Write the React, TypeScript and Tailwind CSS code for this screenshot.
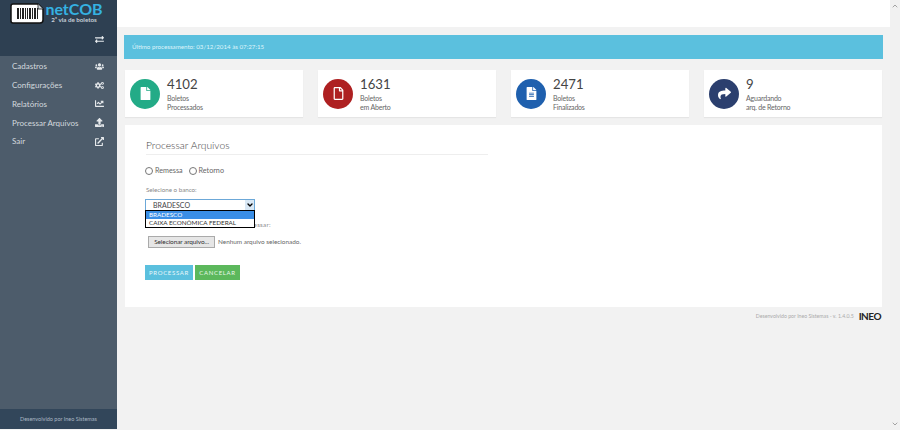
import React from "react";
import { ChevronDown, ChevronUp } from "lucide-react";
import {
  FaUsers,
  FaCogs,
  FaChartLine,
  FaUpload,
  FaExternalLinkAlt,
  FaFile,
  FaRegFile,
  FaFileAlt,
  FaShare,
  FaExchangeAlt,
} from "react-icons/fa";

const menu = [
  { label: "Cadastros", icon: FaUsers },
  { label: "Configurações", icon: FaCogs },
  { label: "Relatórios", icon: FaChartLine },
  { label: "Processar Arquivos", icon: FaUpload },
  { label: "Sair", icon: FaExternalLinkAlt },
];

const stats = [
  { value: "4102", l1: "Boletos", l2: "Processados", icon: FaFile, bg: "bg-[#23ab87]" },
  { value: "1631", l1: "Boletos", l2: "em Aberto", icon: FaRegFile, bg: "bg-[#ae2021]" },
  { value: "2471", l1: "Boletos", l2: "Finalizados", icon: FaFileAlt, bg: "bg-[#1f60ae]" },
  { value: "9", l1: "Aguardando", l2: "arq. de Retorno", icon: FaShare, bg: "bg-[#2b3f6e]" },
];

function BarcodeIcon() {
  const bars = [
    [7, 2], [10, 1], [12, 2], [15, 1], [17, 1], [19, 2], [22, 1], [24, 2], [27, 1],
  ];
  return (
    <svg width="34" height="21" viewBox="0 0 34 21" className="shrink-0">
      <path d="M3 1h25l5 5v11a3 3 0 0 1-3 3H3a2 2 0 0 1-2-2V3a2 2 0 0 1 2-2z" fill="#fff" stroke="#111" strokeWidth="1.5" />
      <path d="M28 1v5h5" fill="#cfd6dc" stroke="#111" strokeWidth="0.8" />
      {bars.map(([x, w]) => (
        <rect key={x} x={x} y="5" width={w} height="11" fill="#222" />
      ))}
    </svg>
  );
}

function Logo() {
  return (
    <div className="flex items-start pt-[3px] pl-[10px]">
      <BarcodeIcon />
      <div className="mt-[-2px] ml-[2px] flex w-[56px] flex-col items-center">
        <span className="text-[16px] leading-[16px] font-bold text-[#35b2e2]">netCOB</span>
        <span className="text-[6.2px] leading-[6px] font-bold text-[#c5ced6]">2ª via de boletos</span>
      </div>
    </div>
  );
}

function Sidebar() {
  return (
    <aside className="flex h-[429px] w-[117px] shrink-0 flex-col bg-[#4d5c6b]">
      <div className="h-[56px] bg-[#2e4052]">
        <Logo />
        <div className="mt-[11px] flex justify-end pr-[13px] text-[#e8ecef]">
          <FaExchangeAlt size={9} />
        </div>
      </div>
      <nav className="flex flex-1 flex-col pt-[1px]">
        {menu.map((m) => (
          <div key={m.label} className="flex h-[18.75px] items-center justify-between pr-[13px] pl-[12px] text-[8px] text-[#d3d9de]">
            <span>{m.label}</span>
            <m.icon size={9} className="text-[#e6e9ec]" />
          </div>
        ))}
      </nav>
      <div className="flex h-[20px] items-center justify-center bg-[#32465a] text-[5.5px] text-[#aab6c2]">
        Desenvolvido por Ineo Sistemas
      </div>
    </aside>
  );
}

function StatCard({ value, l1, l2, icon: Icon, bg }: (typeof stats)[number]) {
  return (
    <div className="flex h-[47px] w-[178px] items-center gap-[7px] bg-white pl-[5px] shadow-[0_1px_1px_rgba(0,0,0,0.05)]">
      <div className={`flex h-[30px] w-[30px] items-center justify-center rounded-full text-white ${bg}`}>
        <Icon size={13} />
      </div>
      <div className="mt-[2px] flex flex-col text-[#666]">
        <span className="mb-[2px] text-[13.2px] leading-[15px] text-[#444]">{value}</span>
        <span className="text-[7px] leading-[9.5px] tracking-[-0.2px]">{l1}</span>
        <span className="text-[7px] leading-[9.5px] tracking-[-0.2px]">{l2}</span>
      </div>
    </div>
  );
}

function Radio({ label }: { label: string }) {
  return (
    <label className="flex items-center gap-[2px] text-[7.2px] text-[#666]">
      <span className="h-[8px] w-[8px] rounded-full border border-[#777] bg-white" />
      {label}
    </label>
  );
}

function UploadForm() {
  return (
    <section className="h-[182px] w-[757px] bg-white pt-[14px] pl-[20px]">
      <h1 className="ml-[1px] w-[342px] border-b border-[#eee] pb-[2px] text-[10.3px] leading-[13px] font-light text-[#444]">
        Processar Arquivos
      </h1>
      <div className="mt-[11px] flex gap-[6px] leading-[10px]">
        <Radio label="Remessa" />
        <Radio label="Retorno" />
      </div>
      <div className="mt-[9px] ml-[1px] text-[6.2px] leading-[9px] text-[#888]">Selecione o banco:</div>
      <div className="relative mt-[5px] w-[110px]">
        <div className="flex h-[12px] items-center justify-between border border-[#6ca8d8] bg-white pl-[7px] text-[7px] text-[#444]">
          BRADESCO
          <span className="flex h-full w-[9px] items-center justify-center bg-[#d9e8f5] text-black">
            <ChevronDown size={8} strokeWidth={4} />
          </span>
        </div>
        <div className="absolute top-[11px] left-0 w-[110px] border border-black bg-white text-[6.3px] leading-[8px] text-[#333]">
          <div className="bg-[#3a8ee6] px-[3px] text-white">BRADESCO</div>
          <div className="px-[3px]">CAIXA ECONÔMICA FEDERAL</div>
        </div>
      </div>
      <div className="mt-[9px] ml-[1px] text-[6.2px] leading-[9px] tracking-[0.3px] text-[#888]">Selecione o arquivo que deseja processar:</div>
      <div className="mt-[7px] ml-[3px] flex items-center gap-[3px] text-[6.4px] text-[#666]">
        <button className="h-[12px] w-[67px] border border-[#aaa] bg-[#e6e6e6] text-[6.5px] leading-[10px] tracking-[-0.1px] text-[#333]">
          Selecionar arquivo...
        </button>
        Nenhum arquivo selecionado.
      </div>
      <div className="mt-[17px] flex gap-[2px]">
        <button className="h-[15px] w-[48px] bg-[#5bc0de] text-[6px] tracking-[0.7px] text-[#e8f7fb]">PROCESSAR</button>
        <button className="h-[15px] w-[45px] bg-[#5cb85c] text-[6px] tracking-[0.7px] text-[#e8f7e8]">CANCELAR</button>
      </div>
    </section>
  );
}

function Scrollbar() {
  return (
    <div className="flex w-[10px] shrink-0 flex-col items-center justify-between bg-[#f1f1f1] py-[2px] text-[#a3a3a3]">
      <ChevronUp size={8} strokeWidth={3} />
      <ChevronDown size={8} strokeWidth={3} />
    </div>
  );
}

export default function App() {
  return (
    <div className="flex h-[430px] w-[900px] overflow-hidden bg-[#f2f2f2] font-['Lato','Open_Sans',sans-serif]">
      <Sidebar />
      <main className="flex flex-1 flex-col">
        <div className="h-[27px] bg-white" />
        <div className="flex flex-col pt-[8px] pl-[7px]">
          <div className="flex h-[24px] w-[759px] items-center bg-[#5bc0de] pl-[8px] text-[6.2px] text-[#dff4fa]">
            Último processamento: 03/12/2014 às 07:27:15
          </div>
          <div className="mt-[11px] ml-[1px] flex w-[757px] justify-between">
            {stats.map((s) => (
              <StatCard key={s.value} {...s} />
            ))}
          </div>
          <div className="mt-[8px] ml-[1px]">
            <UploadForm />
          </div>
          <div className="mt-[4px] ml-[1px] flex w-[757px] items-center justify-end gap-[5px] pr-[1px] text-[5.2px] text-[#aaa]">
            Desenvolvido por Ineo Sistemas - v. 1.4.0.5
            <span className="text-[10px] leading-[11px] font-bold tracking-[-0.5px] text-[#222]">INEO</span>
          </div>
        </div>
      </main>
      <Scrollbar />
    </div>
  );
}
